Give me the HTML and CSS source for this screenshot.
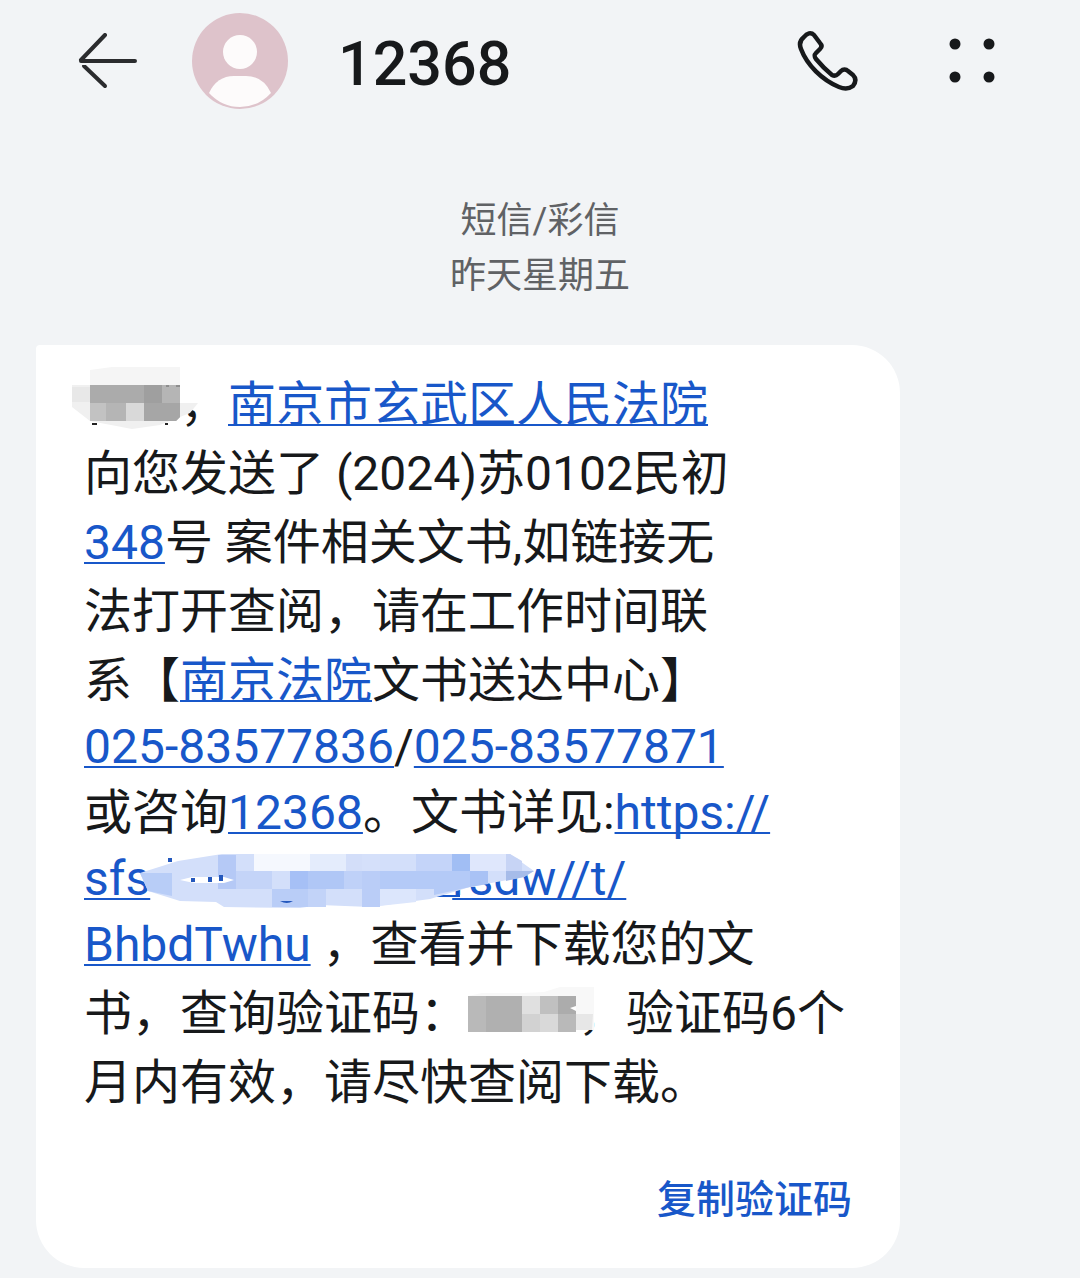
FILE: index.html
```html
<!DOCTYPE html>
<html lang="zh-CN">
<head>
  <meta charset="UTF-8" />
  <meta name="viewport" content="width=device-width, initial-scale=1.0" />
  <title>12368</title>
  <link rel="stylesheet" href="styles.css">
</head>
<body>
  <header class="topbar">
    <button class="icon-btn back" aria-label="返回">
      <svg width="60" height="56" viewBox="0 0 60 56" fill="none" stroke="#2b2c2e" stroke-width="4" stroke-linecap="round">
        <path d="M27 2L3 27M3 28H57" />
        <path d="M6 33L27 53" />
        <path d="M0 31H14" stroke="#f2f4f6" stroke-width="2" stroke-linecap="butt" />
      </svg>
    </button>
    <svg class="avatar" width="96" height="96" viewBox="0 0 96 96">
      <circle cx="48" cy="48" r="48" fill="#dec3cb" />
      <circle cx="48" cy="39" r="17" fill="#fdfbfb" />
      <path d="M17 80Q25 63 42 63H54Q71 63 79 80Q66 94 48 94T17 80Z" fill="#fdfbfb" />
    </svg>
    <h1 class="number">12368</h1>
    <button class="icon-btn call" aria-label="拨打电话">
      <svg width="62" height="62" viewBox="0 0 62 62" fill="none" stroke="#17191b" stroke-width="4.5" stroke-linejoin="round">
        <path d="M8 7C11 3 15 2 18 5L24 13C26 15 26 17 24 19L20 23C18 25 18 26 20 29C25 35 31 41 36 45C38 46 40 46 42 44L45 41C47 39 50 39 52 41L57 45C60 48 60 52 57 56C53 59 48 59 43 57C26 50 11 35 5 19C3 14 4 10 8 7Z" />
      </svg>
    </button>
    <button class="icon-btn more" aria-label="更多">
      <svg width="48" height="46" viewBox="0 0 48 46" fill="#17191b">
        <circle cx="7" cy="6" r="5.5" />
        <circle cx="41" cy="6" r="5.5" />
        <circle cx="7" cy="39" r="5.5" />
        <circle cx="41" cy="39" r="5.5" />
      </svg>
    </button>
  </header>

  <main class="thread">
    <div class="meta">
      <p>短信/彩信</p>
      <p>昨天星期五</p>
    </div>

    <article class="bubble">
      <p class="message">
        <span class="line"><span class="hidden-name"><svg class="mosaic" width="132" height="66" viewBox="0 0 132 66">
          <path d="M18 3L40 0H108V18H18Z" fill="#f5f5f5" />
          <path d="M0 18H108V36H126L118 46L108 50L88 58L60 62L18 54L0 40Z" fill="#f0f0f0" />
          <path d="M0 20H18V35H0Z" fill="#e8e8e8" />
          <path d="M18 18H108V50L104 54H18Z" fill="#b5b5b5" />
          <path d="M18 18H72V36H18Z" fill="#ababab" />
          <path d="M72 18H90V36H72Z" fill="#9f9f9f" />
          <path d="M18 36H34V54H18Z" fill="#c2c2c2" />
          <path d="M54 36H72V54H54Z" fill="#d9d9d9" />
          <path d="M72 36H108V50L104 54H72Z" fill="#a6a6a6" />
          <path d="M20 57h5M93 57h3" stroke="#222222" stroke-width="2" />
          <path d="M94 19h3M104 19h4" stroke="#666666" stroke-width="1" />
        </svg></span>，<a href="#">南京市玄武区人民法院</a></span>
        <span class="line">向您发送了 (2024)苏0102民初</span>
        <span class="line"><a href="#">348</a>号 案件相关文书,如链接无</span>
        <span class="line">法打开查阅，请在工作时间联</span>
        <span class="line">系【<a href="#">南京法院</a>文书送达中心】</span>
        <span class="line latin"><a href="tel:025-83577836">025-83577836</a>/<a href="tel:025-83577871">025-83577871</a></span>
        <span class="line">或咨询<a href="tel:12368">12368</a>。文书详见:<a href="#">https://</a></span>
        <span class="line latin"><a href="#">sfs<span class="hidden-url"><svg class="mosaic" width="402" height="56" viewBox="0 0 402 56">
          <path d="M290 43H320" stroke="#1857c9" stroke-width="2" />
          <path d="M0 20L38 8L82 1H370L394 18L384 24L330 34L290 46L230 54L180 52L160 55L84 54L76 49L40 48L8 38Z" fill="#d3dffa" />
          <path d="M0 20H32V43L8 38Z" fill="#b8cdf7" />
          <path d="M114 1H170V18H114Z" fill="#f5f8fe" />
          <path d="M170 1H206V18H170Z" fill="#e4ecfc" />
          <path d="M206 1H224V18H206Z" fill="#d3def9" />
          <path d="M78 2H96V36H78Z" fill="#b5c9f6" />
          <path d="M96 18H132V36H96Z" fill="#c4d4f8" />
          <path d="M150 18H168V36H150Z" fill="#a6c0f6" />
          <path d="M168 18H204V36H168Z" fill="#b0c7f6" />
          <path d="M204 18H222V36H204Z" fill="#bfd1f8" />
          <path d="M240 18H294V36H240Z" fill="#b4caf7" />
          <path d="M132 36H168V54H132Z" fill="#b9cdf7" />
          <path d="M168 36H186V54H168Z" fill="#c2d3f8" />
          <path d="M240 36H276V49L230 54H222V36Z" fill="#dce6fc" />
          <path d="M222 1H240V18H222Z" fill="#d5e0fa" />
          <path d="M222 18H240V54H222Z" fill="#bacdf7" />
          <path d="M276 1H312V18H276Z" fill="#c4d4f9" />
          <path d="M312 1H330V18H312Z" fill="#a1bef4" />
          <path d="M294 18H330V34L294 42Z" fill="#b4caf7" />
          <path d="M330 1H366V18H330Z" fill="#dfe7fc" />
          <path d="M330 18H348V31L330 34Z" fill="#a9c2f5" />
          <path d="M366 1H370L382 8V18H366Z" fill="#c7d4f5" />
          <path d="M366 18H394L384 24L366 28Z" fill="#a6bce9" />
          <path d="M40 27L52 24H84L94 27L84 30H54Z" fill="#ffffff" />
          <path d="M51 25h4v4h-4zM68 24h4v5h-4zM79 22h4v6h-4zM28 5h4v4h-4z" fill="#2458bd" />
          <path d="M140 48H153Q147 52 140 48Z" fill="#2458bd" />
        </svg></span>rsdw//t/</a></span>
        <span class="line"><a href="#">BhbdTwhu</a> ，查看并下载您的文</span>
        <span class="line">书，查询验证码：<span class="hidden-code"><svg class="mosaic" width="132" height="48" viewBox="0 0 132 48">
          <path d="M0 10L14 7H54L76 6L92 1H126V44H108V46H0Z" fill="#f8f8f8" />
          <path d="M0 10H108V46H0Z" fill="#b9b9b9" />
          <path d="M18 10H54V46H18Z" fill="#b0b0b0" />
          <path d="M54 10H72V28H54Z" fill="#e0e0e0" />
          <path d="M72 10H90V28H72Z" fill="#c0c0c0" />
          <path d="M54 28H72V46H54Z" fill="#d2d2d2" />
          <path d="M72 28H90V46H72Z" fill="#d9d9d9" />
          <path d="M90 10H108V28H90Z" fill="#acacac" />
          <path d="M108 28H125L124 44H108Z" fill="#e7e7e7" />
          <path d="M102 22L108 20V25Z" fill="#ffffff" />
        </svg></span>，验证码6个</span>
        <span class="line">月内有效，请尽快查阅下载。</span>
      </p>
      <button class="copy">复制验证码</button>
    </article>
  </main>
</body>
</html>
```

FILE: styles.css
```css
:root {
  --bg-color: #f2f4f6;
  --text-color: #17191b;
  --muted: #606265;
  --link: #1857c9;
}

* {
  box-sizing: border-box;
}

body {
  margin: 0;
  background: var(--bg-color);
  color: var(--text-color);
  font-family: Roboto, "Noto Sans CJK SC", sans-serif;
  text-spacing-trim: space-all;
}

.topbar {
  display: flex;
  align-items: center;
  height: 122px;
  padding: 0 84px 0 78px;
}

.icon-btn {
  display: flex;
  padding: 0;
  border: none;
  background: none;
  cursor: pointer;
}

.avatar {
  margin-left: 54px;
}

.number {
  margin: 0 0 0 50px;
  padding-top: 6px;
  font-size: 61px;
  font-weight: 500;
  line-height: 80px;
}

.call {
  margin-left: auto;
}

.more {
  margin-left: 90px;
}

.thread {
  padding: 72px 36px 10px;
}

.meta {
  color: var(--muted);
  font-size: 36px;
  line-height: 55px;
  text-align: center;
}

.meta p {
  margin: 0;
}

.bubble {
  display: flex;
  flex-direction: column;
  width: 864px;
  max-width: 100%;
  margin-top: 41px;
  padding: 25px 48px 40px;
  background: #ffffff;
  border-radius: 4px 48px 48px 48px;
}

.message {
  margin: 0;
  font-size: 48px;
}

.line {
  display: block;
  line-height: 69px;
  white-space: nowrap;
}

.line.latin {
  line-height: 63px;
}

.message a {
  color: var(--link);
  text-decoration: underline;
  text-decoration-thickness: 2px;
  text-underline-offset: 3px;
  text-decoration-skip-ink: none;
}

/* blurred-out parts of the message */
.hidden-name,
.hidden-url,
.hidden-code {
  display: inline-block;
  position: relative;
  height: 36px;
}

.hidden-name {
  width: 96px;
}

.hidden-url {
  width: 302px;
}

.hidden-code {
  width: 110px;
}

.mosaic {
  position: absolute;
  left: 0;
  bottom: -4px;
}

.hidden-name .mosaic {
  left: -12px;
  bottom: -12px;
}

.hidden-url .mosaic {
  left: -10px;
  bottom: -14px;
}

.copy {
  align-self: flex-end;
  margin-top: 55px;
  padding: 0;
  border: none;
  background: none;
  color: var(--link);
  font-family: inherit;
  font-size: 39px;
  font-weight: 500;
  line-height: 56px;
  cursor: pointer;
}
```
